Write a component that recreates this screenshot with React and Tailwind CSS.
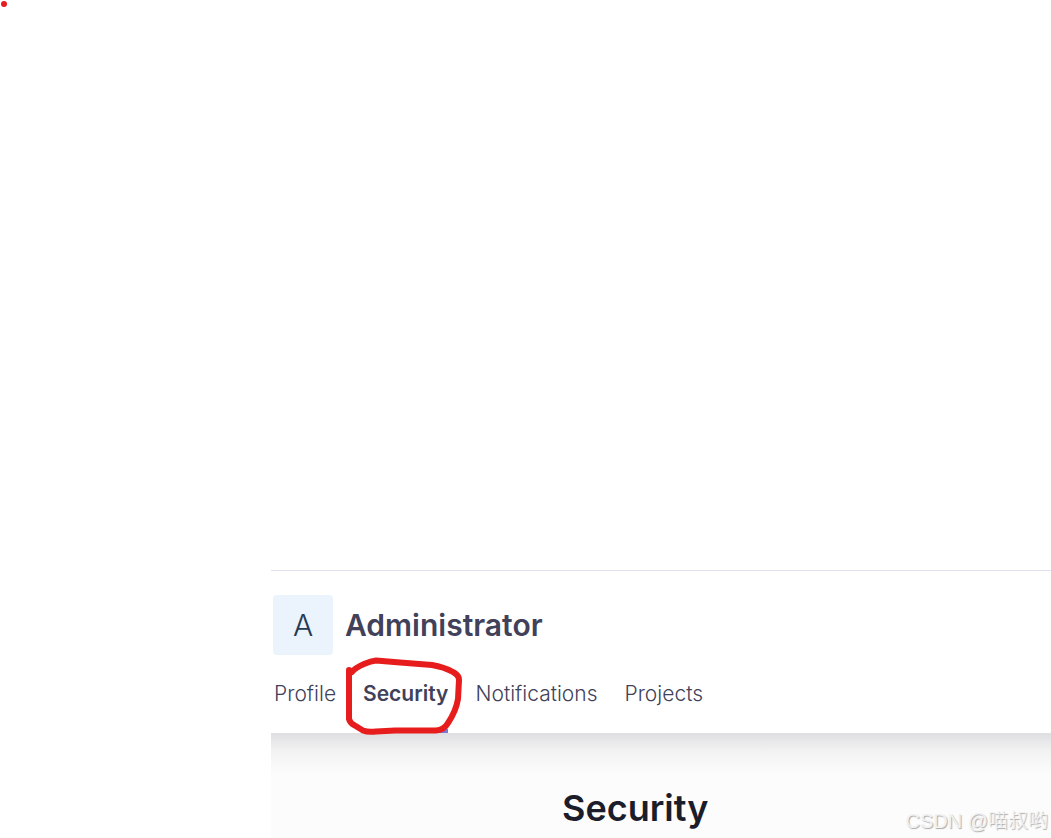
import { useState } from 'react';
import clsx from 'clsx';

const tabs = ['Profile', 'Security', 'Notifications', 'Projects'];

function HandCircle() {
  return (
    <svg
      className="pointer-events-none absolute -left-5 top-0 h-[84px] w-[124px]"
      viewBox="343 655 124 84"
      fill="none"
      stroke="#e71d1d"
      strokeWidth="6"
      strokeLinecap="round"
      strokeLinejoin="round"
      aria-hidden="true"
    >
      <path d="M349 670V719Q350 723 354 725L363 730.5Q368 732.5 376 731.5L395 730.5L436 730.5Q444 730 448 723Q456 711 458 699L459 680Q459 675 453 672Q444 667 432 665L400 662.5L376 660.5Q371 661 364 664Q355 668 352 672" />
    </svg>
  );
}

export default function App() {
  const [activeTab, setActiveTab] = useState('Security');

  return (
    <div className="relative flex min-h-screen bg-white font-['Inter',sans-serif] text-[#41415a]">
      <span className="absolute left-px top-px size-1.5 rounded-full bg-[#e71d1d]" />

      <aside className="w-[271px] shrink-0" />

      <div className="flex min-w-0 flex-1 flex-col pt-[570px]">
        <header className="relative z-10 border-t border-[#e1e1ef] pt-6">
          {/* User */}
          <div className="flex items-center gap-3 pl-0.5">
            <div className="flex size-[60px] items-center justify-center rounded bg-[#ebf3fc] text-3xl font-light text-[#243b53]">
              A
            </div>
            <h1 className="text-3xl font-semibold">Administrator</h1>
          </div>

          {/* Tabs */}
          <nav className="flex h-[78px] gap-[27px] pl-[3px]">
            {tabs.map(tab => (
              <button
                key={tab}
                type="button"
                onClick={() => setActiveTab(tab)}
                className={clsx(
                  'relative text-[21px]',
                  tab === activeTab ? 'font-semibold' : 'font-light'
                )}
              >
                {tab}
                {tab === activeTab && (
                  <span className="absolute inset-x-0 bottom-0 h-1 bg-[#7b79d8]" />
                )}
                {tab === 'Security' && <HandCircle />}
              </button>
            ))}
          </nav>
        </header>

        <main className="relative flex-1 bg-[#fcfcfc] bg-linear-to-b from-[#dfdfe1] via-[#f2f2f3] via-[18px] to-[#fcfcfc] to-[40px] pl-[291px] pt-[55px]">
          <h2 className="text-4xl font-semibold text-[#1c1d2b]">Security</h2>
          <span className="absolute bottom-[3px] right-[3px] font-['Liberation_Sans','Noto_Sans_CJK_SC',sans-serif] text-xl font-light text-[#f2f2f2] [text-shadow:1px_1px_1px_#aaa]">
            CSDN @喵叔哟
          </span>
        </main>
      </div>
    </div>
  );
}
